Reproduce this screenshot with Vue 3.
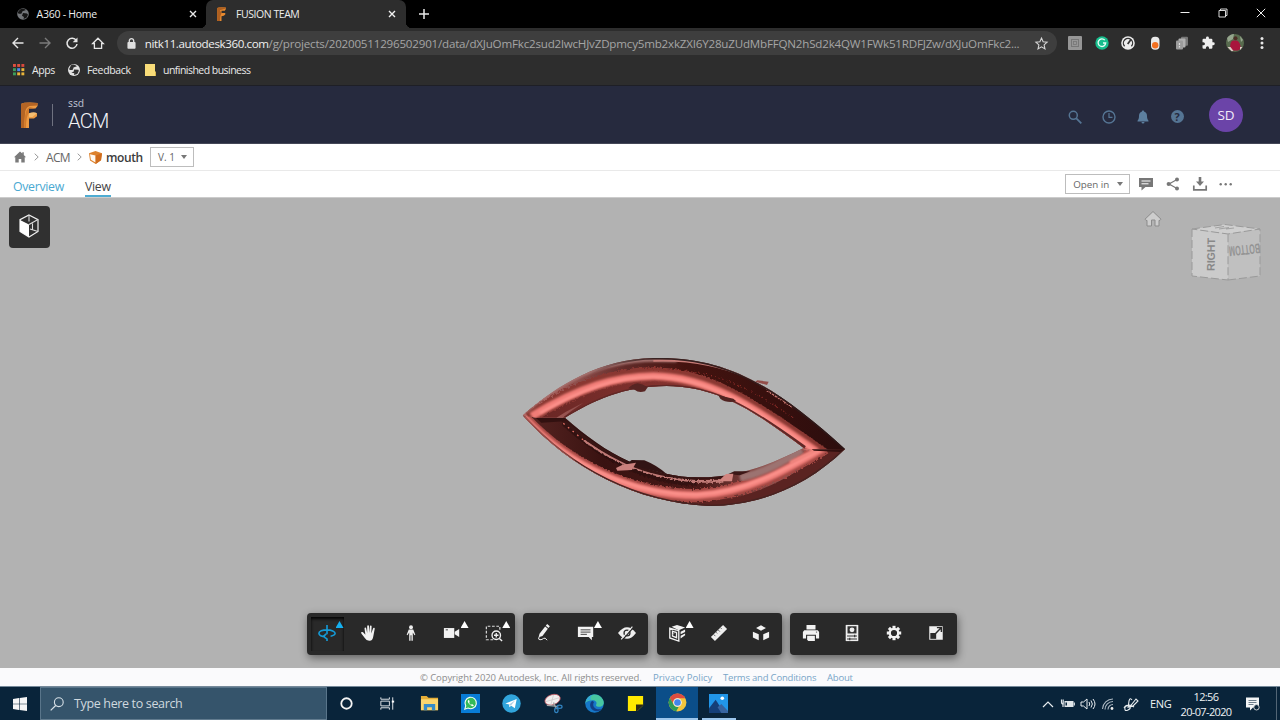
<script setup>
const extraMark = [0, 1, 2]
const appDots = [
  { x: 0, y: 0, c: '#e0503f' }, { x: 4.2, y: 0, c: '#e0503f' }, { x: 8.4, y: 0, c: '#d8483c' },
  { x: 0, y: 4.2, c: '#3d9e5c' }, { x: 4.2, y: 4.2, c: '#4a8af0' }, { x: 8.4, y: 4.2, c: '#e9b53a' },
  { x: 0, y: 8.4, c: '#3d9e5c' }, { x: 4.2, y: 8.4, c: '#e9b53a' }, { x: 8.4, y: 8.4, c: '#e9b53a' }
]
const teeth = [0, 45, 90, 135, 180, 225, 270, 315]
</script>

<template>
  <div class="screen">
    <!-- Browser tabs -->
    <div class="tabstrip">
      <div class="tab idle">
        <svg class="fav" viewBox="0 0 12 12"><circle cx="6" cy="6" r="5.8" fill="#73767a"/><path d="M1 5.200q2 1 3.500 .3l1-2.200L9 2q-3-2-6-.5L1 4zM6 5l4 .4 1 1.300-1.500 3L6.500 11l.5-2-2-1.300z" fill="#151515"/></svg>
        <span class="tabname t-home">A360 - Home</span>
        <svg class="x" viewBox="0 0 8 8"><path d="M1 1l6 6M7 1L1 7" stroke="#e8e8e8" stroke-width="1.400"/></svg>
      </div>
      <div class="tab active">
        <svg class="fav f" viewBox="0 0 18 26"><path d="M1 2q3-2 16-1v3l-2 3H9v4h7v3q-2 3-7 3v9H1z" fill="#e6892f"/><path d="M1 2v24h5q0-10 3-15l-3-5 11-3V1Q5-.5 1 2z" fill="#ad5f20"/></svg>
        <span class="tabname t-fusion">FUSION TEAM</span>
        <svg class="x" viewBox="0 0 8 8"><path d="M1 1l6 6M7 1L1 7" stroke="#f1f1f1" stroke-width="1.400"/></svg>
      </div>
      <svg class="plus" viewBox="0 0 10 10"><path d="M5 0v10M0 5h10" stroke="#e8e8e8" stroke-width="1.500"/></svg>
      <div class="wincontrols">
        <svg viewBox="0 0 10 10"><path d="M.5 4.500h9" stroke="#eee" stroke-width="1"/></svg>
        <svg viewBox="0 0 10 10"><path d="M1 2.500h6.500V9H1zM2.500 2.500V1H9v6.500H7.500" fill="none" stroke="#eee" stroke-width=".9"/></svg>
        <svg viewBox="0 0 10 10"><path d="M.8 .8l8.400 8.400M9.200 .8L.8 9.200" stroke="#eee" stroke-width="1"/></svg>
      </div>
    </div>

    <!-- Address row -->
    <div class="address">
      <div class="nav">
        <svg viewBox="0 0 12 12"><path d="M11.500 6H1M6 1L1 6l5 5" fill="none" stroke="#e6e6e6" stroke-width="1.400"/></svg>
        <svg viewBox="0 0 12 12"><path d="M.5 6H11M6 1l5 5-5 5" fill="none" stroke="#7b7b7b" stroke-width="1.400"/></svg>
        <svg viewBox="0 0 12 12"><path d="M10.300 3.600A5 5 0 1 0 11 7" fill="none" stroke="#e6e6e6" stroke-width="1.500"/><path d="M11.500 .4v4.800H6.700z" fill="#e6e6e6"/></svg>
        <svg viewBox="0 0 12 12"><path d="M.7 6.500L6 1.200l5.300 5.300H9.600v4.800H2.400V6.500z" fill="none" stroke="#e6e6e6" stroke-width="1.300"/></svg>
      </div>
      <div class="pill">
        <svg class="lock" viewBox="0 0 8 10"><rect x=".3" y="3.700" width="7.400" height="6" rx=".8" fill="#e0e0e0"/><path d="M2 4V2.500a2 2 0 0 1 4 0V4" fill="none" stroke="#e0e0e0" stroke-width="1.200"/></svg>
        <span class="url"><b>nitk11.autodesk360.com</b><i>/g/projects/20200511296502901/data/dXJuOmFkc2sud2lwcHJvZDpmcy5mb2xkZXI6Y28uZUdMbFFQN2hSd2k4QW1FWk51RDFJZw/dXJuOmFkc2...</i></span>
        <svg class="star" viewBox="0 0 12 12"><path d="M6 1l1.500 3.400 3.700.4-2.800 2.500.8 3.700L6 9.100 2.800 11l.8-3.700L.8 4.800l3.700-.4z" fill="none" stroke="#d6d6d6" stroke-width="1"/></svg>
      </div>
      <div class="exts">
        <svg viewBox="0 0 20 20"><rect x="3" y="3" width="14" height="14" rx="1" fill="#969696"/><rect x="6.500" y="6.500" width="7" height="7" fill="none" stroke="#777"/><rect x="8.500" y="8.500" width="3" height="3" fill="none" stroke="#777" stroke-width=".8"/></svg>
        <svg viewBox="0 0 20 20"><circle cx="10" cy="10" r="6.700" fill="#17bd8c"/><path d="M12.800 7.200A3.800 3.800 0 1 0 13.700 10H11" fill="none" stroke="#e9fff7" stroke-width="1.300"/></svg>
        <svg viewBox="0 0 20 20"><circle cx="10" cy="10" r="6.800" fill="#ededed"/><path d="M6.600 13.200a4.600 4.600 0 1 1 6.800 0" fill="none" stroke="#333" stroke-width="1.300"/><path d="M9.700 11L13 6.500" stroke="#333" stroke-width="1.700"/></svg>
        <svg viewBox="0 0 20 20"><rect x="6" y="3.700" width="8.500" height="13" rx="4" fill="#e9e9e9"/><circle cx="10.200" cy="12.200" r="3.200" fill="#f37021"/></svg>
        <svg viewBox="0 0 20 20"><rect x="9" y="3.700" width="7" height="9" rx="1" fill="#777"/><rect x="6.500" y="5.500" width="7" height="9" rx="1" fill="#b0b0b0"/><rect x="4" y="7.500" width="7" height="9" rx="1" fill="#9b9b9b"/><path d="M7.500 10v2M7.500 13v1.500" stroke="#ddd" stroke-width="1.200"/></svg>
        <svg viewBox="0 0 24 24"><path d="M20.500 11H19V7a2 2 0 0 0-2-2h-4V3.500a2.500 2.500 0 0 0-5 0V5H4a2 2 0 0 0-2 2v3.800h1.500a2.700 2.700 0 0 1 0 5.400H2V20a2 2 0 0 0 2 2h3.800v-1.500a2.700 2.700 0 0 1 5.400 0V22H17a2 2 0 0 0 2-2v-4h1.500a2.500 2.500 0 0 0 0-5z" transform="translate(4 3.500) scale(.7)" fill="#eee"/></svg>
        <svg viewBox="0 0 20 20"><circle cx="10" cy="10" r="9" fill="#586b4e"/><path d="M2 5q3-4 7-4l-1 5-5 3zM15 3l3 4-2 2z" fill="#94a58c"/><path d="M5 15.500q0-7.500 3-8h4q3 1 4 8l-3 2H8z" fill="#a9153d"/><circle cx="10.500" cy="5.300" r="2" fill="#4c2c25"/><path d="M2.500 14h3l3 4-2 .3zM15 14l2.500 0-2.500 3z" fill="#e0ccc8"/></svg>
        <svg viewBox="0 0 20 20"><circle cx="10" cy="5.500" r="1.500" fill="#e8e8e8"/><circle cx="10" cy="10" r="1.500" fill="#e8e8e8"/><circle cx="10" cy="14.500" r="1.500" fill="#e8e8e8"/></svg>
      </div>
    </div>

    <!-- Bookmarks -->
    <div class="bookmarks">
      <svg class="apps" viewBox="0 0 12 12"><rect v-for="d in appDots" :key="d.x + '-' + d.y" :x="d.x" :y="d.y" width="2.900" height="2.900" :fill="d.c"/></svg>
      <span class="b1">Apps</span>
      <svg class="globe" viewBox="0 0 12 12"><circle cx="6" cy="6" r="6" fill="#e2e2e2"/><path d="M1 5.200q2 1.600 4 .4l.5-2L9 2.200Q6-.4 3 1.200zM6 5.500l4.500.2.300 1.300-1.500 3L6 11l.3-1.700-3-.8 2.500-.9z" fill="#303030"/></svg>
      <span class="b2">Feedback</span>
      <svg class="folder" viewBox="0 0 11 12"><path d="M0 0h10v9.500l1 2.500H0z" fill="#f8dc78"/><path d="M10 7v5h1V8z" fill="#d7b64c"/></svg>
      <span class="b3">unfinished business</span>
    </div>

    <!-- Project header -->
    <header class="project">
      <svg class="logo" viewBox="0 0 18 26"><path d="M1 2Q5-.3 17.500 1v3l-2 2.500H9v4.700h8v3L14 16.500H9V26H1z" fill="#ed9a42"/><path d="M1 2Q5-.3 17.500 1v2.500L9.500 4Q5 6 5 12L4 26H1z" fill="#b46525"/><path d="M5 14q1-8 5-9l5 1.500H9v4.500q-3 3-3 15H4z" fill="#d27a2b"/><path d="M9 11.200q5-2 8 0l-4.500 3.800H9z" fill="#f4bd72"/></svg>
      <div class="sep"></div>
      <div class="names"><span class="team">ssd</span><span class="proj">ACM</span></div>
      <div class="hicons">
        <svg viewBox="0 0 14 14"><circle cx="5.300" cy="5.300" r="4" fill="none" stroke="#557594" stroke-width="1.500"/><path d="M8.300 8.300l5 5" stroke="#557594" stroke-width="1.800"/></svg>
        <svg viewBox="0 0 14 14"><circle cx="7" cy="7" r="6" fill="none" stroke="#557594" stroke-width="1.400"/><path d="M7 3v4.300h3.500" fill="none" stroke="#557594" stroke-width="1.200"/></svg>
        <svg viewBox="0 0 14 14"><path d="M7 .5c.8 0 1 .4 1 1 2.200.6 3 2.300 3 4.500 0 3 .8 3.600 1.500 4.800v.7h-11v-.7C2.300 9.600 3 9 3 6c0-2.200.8-3.900 3-4.500 0-.6.2-1 1-1zM5.500 12h3a1.500 1.500 0 0 1-3 0z" fill="#5c7f9f"/></svg>
        <div class="help">?</div>
      </div>
      <div class="avatar">SD</div>
    </header>

    <!-- Breadcrumbs -->
    <div class="crumbs">
      <svg class="home" viewBox="0 0 13 12"><path d="M6.500 0l2.500 2.300V.8h1.600v3L13 6.300h-1.400V12H7.900V8.200H5.100V12H1.400V6.300H0z" fill="#7a7a7a"/></svg>
      <svg class="chev c1" viewBox="0 0 5 8"><path d="M.7 .7L4.200 4 .7 7.300" fill="none" stroke="#9a9a9a"/></svg>
      <span class="acm">ACM</span>
      <svg class="chev c2" viewBox="0 0 5 8"><path d="M.7 .7L4.200 4 .7 7.300" fill="none" stroke="#9a9a9a"/></svg>
      <svg class="part" viewBox="0 0 13 13"><path d="M0 2.300L6.500 0 13 2.300l-1 7L6.700 13 1 9.400z" fill="#dd822d"/><path d="M1 3.300l5.500 1.300v7L1.900 8.800z" fill="#fffaf3"/><path d="M6.700 4.600L13 2.300l-1 7L6.700 13z" fill="#cf6c1d"/></svg>
      <span class="mouth">mouth</span>
      <div class="version"><span>V. 1</span><em></em></div>
    </div>

    <!-- View tabs -->
    <div class="viewbar">
      <span class="ov">Overview</span>
      <span class="vw">View</span>
      <div class="openin"><span>Open in</span><em></em></div>
      <div class="vicons">
        <svg viewBox="0 0 14 14"><path d="M0 1h14v9H6.500L2.500 13.500V10H0z" fill="#777"/><path d="M2.500 4h9M2.500 6.800h7" stroke="#fff" stroke-width="1"/></svg>
        <svg viewBox="0 0 14 14"><path d="M11 2.500L3 7l8 4.500" fill="none" stroke="#777" stroke-width="1.200"/><circle cx="11" cy="2.400" r="2" fill="#777"/><circle cx="2.700" cy="7" r="2.100" fill="#777"/><circle cx="11" cy="11.600" r="2" fill="#777"/></svg>
        <svg viewBox="0 0 14 14"><path d="M5.700 0h2.600v4.500H11L7 9 3 4.500h2.700z" fill="#777"/><path d="M.8 8.500v4.300h12.400V8.500" fill="none" stroke="#777" stroke-width="1.700"/></svg>
        <svg viewBox="0 0 14 14"><circle v-for="n in extraMark" :key="n" :cx="1.700 + n * 5" cy="7.200" r="1.200" fill="#777"/></svg>
      </div>
    </div>

    <!-- 3D viewer -->
    <main class="viewer">
      <div class="modelbtn">
        <svg viewBox="0 0 22 24"><path d="M11 1l9 4.600v11.800L11 23l-9-5.600V5.600z" fill="none" stroke="#f2f2f2" stroke-width="1.200"/><path d="M2 6l9 4.500V23l-9-5.600z" fill="#fff"/><path d="M11 10.500l9-4.900M11 1v6.500M12 15l8 2.500M14.500 9.500v6" fill="none" stroke="#ddd" stroke-width="1.100"/></svg>
      </div>
      <svg class="model" viewBox="0 0 1050 540">
        <defs>
          <linearGradient id="topShade" gradientUnits="userSpaceOnUse" x1="40" y1="0" x2="1005" y2="0">
            <stop offset="0" stop-color="#b7605c"/><stop offset=".16" stop-color="#90504d"/><stop offset=".32" stop-color="#602a28"/><stop offset=".5" stop-color="#44130f"/><stop offset="1" stop-color="#2c0d0d"/>
          </linearGradient>
          <linearGradient id="lowShade" gradientUnits="userSpaceOnUse" x1="40" y1="0" x2="1005" y2="0">
            <stop offset="0" stop-color="#572522"/><stop offset=".25" stop-color="#391211"/><stop offset=".55" stop-color="#4a1917"/><stop offset=".8" stop-color="#965450"/><stop offset="1" stop-color="#5e2725"/>
          </linearGradient>
          <linearGradient id="innerTop" gradientUnits="userSpaceOnUse" x1="90" y1="0" x2="900" y2="0">
            <stop offset="0" stop-color="#6a2725"/><stop offset=".5" stop-color="#85332f"/><stop offset="1" stop-color="#bf6560"/>
          </linearGradient>
          <linearGradient id="rim" gradientUnits="userSpaceOnUse" x1="240" y1="0" x2="1005" y2="0">
            <stop offset="0" stop-color="#392322" stop-opacity="0"/><stop offset=".25" stop-color="#392322"/><stop offset="1" stop-color="#2b1616"/>
          </linearGradient>
          <filter id="rough" x="-5%" y="-10%" width="110%" height="120%">
            <feTurbulence type="fractalNoise" baseFrequency=".16" numOctaves="2" seed="4"/>
            <feDisplacementMap in="SourceGraphic" scale="16"/>
          </filter>
          <filter id="soft" x="-5%" y="-10%" width="110%" height="120%"><feGaussianBlur stdDeviation="3"/></filter>
          <clipPath id="upper"><path d="M38 226C150 130 270 58 430 54C640 48 790 130 1005 327H885C750 225 630 138 470 138C340 138 250 182 165 233H80z"/></clipPath>
          <clipPath id="lower"><path d="M38 226L80 233H165C290 345 420 412 570 412C690 412 790 370 885 322L920 329L1005 327C890 440 745 498 600 498C380 490 180 385 38 226z"/></clipPath>
        </defs>
        <g clip-path="url(#lower)">
          <rect width="1050" height="540" fill="url(#lowShade)"/>
          <path d="M45 235C190 385 380 485 590 485C740 475 860 405 960 322L1010 322V540H0z" fill="#5a2321"/>
          <path d="M38 232C180 385 370 467 560 467C710 460 830 390 945 323" fill="none" stroke="#a34743" stroke-width="40" filter="url(#rough)"/>
          <path d="M40 230C180 383 370 466 560 466C710 459 830 389 945 321" fill="none" stroke="#ef7d78" stroke-width="22" filter="url(#soft)"/>
          <path d="M110 300C240 402 400 464 560 464C700 459 820 392 930 329" fill="none" stroke="#ff9690" stroke-width="7" filter="url(#soft)"/>
          <path d="M165 245C290 357 420 424 560 423" fill="none" stroke="#230b0b" stroke-width="28" opacity=".5" filter="url(#rough)"/>
          <path d="M225 303C330 378 440 416 560 424H640" fill="none" stroke="#c07a76" stroke-width="8" filter="url(#rough)"/>
          <path d="M155 238C290 354 410 410 560 413L640 412" fill="none" stroke="#381514" stroke-width="10"/>
          <path d="M160 250L225 304" stroke="#e66f64" stroke-width="4" stroke-dasharray="5 13"/>
          <path d="M690 414C770 395 820 365 875 330" fill="none" stroke="#9c7371" stroke-width="22" filter="url(#soft)"/>
          <path d="M840 368Q905 336 930 326L880 324" fill="none" stroke="#f28780" stroke-width="10" filter="url(#soft)"/>
          <path d="M38 226C180 385 380 490 600 498C745 498 890 440 1005 327" fill="none" stroke="#452321" stroke-width="8"/>
          <path d="M40 229Q100 300 190 365" fill="none" stroke="#c86963" stroke-width="9" filter="url(#soft)"/>
        </g>
        <g clip-path="url(#upper)">
          <rect width="1050" height="540" fill="url(#topShade)"/>
          <path d="M85 250C230 142 350 120 470 123C620 128 760 230 915 345L885 322C750 225 620 138 470 138C320 145 240 185 165 250z" fill="none" stroke="url(#innerTop)" stroke-width="34"/>
          <path d="M55 232C210 136 310 103 430 103C600 105 720 192 940 345" fill="none" stroke="#8a3733" stroke-width="42" filter="url(#rough)"/>
          <path d="M65 229C210 140 320 109 430 108C590 110 720 192 920 335" fill="none" stroke="#f17d77" stroke-width="23" filter="url(#soft)"/>
          <path d="M90 219C220 144 320 111 430 110C590 112 720 194 910 330" fill="none" stroke="#ff9690" stroke-width="7" filter="url(#soft)"/>
          <path d="M38 221C155 124 270 62 430 60C450 60 480 61 500 62" fill="none" stroke="#a87673" stroke-width="10" filter="url(#soft)"/>
          <path d="M430 62Q590 56 720 115L800 162" fill="none" stroke="#c87c77" stroke-width="6"/>
          <path d="M770 150L850 202" stroke="#c9766f" stroke-width="7" stroke-dasharray="7 3" filter="url(#rough)"/>
          <path d="M240 100C300 70 370 55 430 54C640 48 790 130 1005 327" fill="none" stroke="url(#rim)" stroke-width="9"/>
          <path d="M165 233C250 182 340 138 470 138C630 138 750 225 885 322" fill="none" stroke="#5f2826" stroke-width="8"/>
          <path d="M400 88Q550 84 650 122T850 235" fill="none" stroke="#922d28" stroke-width="4" stroke-dasharray="3 9" filter="url(#rough)"/>
        </g>
        <path d="M78 234h87l9 9-80 5z" fill="#321110"/>
        <path d="M905 328h100l-15 8-78-4z" fill="#32100f"/>
        <path d="M355 145q10-12 28-15 15 2 30 12l-8 12q-20 5-30-4z" fill="#582523"/>
        <path d="M625 166l45 10 9 8q-30 6-48-8z" fill="#512321"/>
        <path d="M742 121l34 4-5 10-35-10z" fill="#934e4a"/>
        <path d="M350 372l15-12 38 1q38 15 68 42l-70-18z" fill="#321414"/>
        <path d="M318 384l20-10 40-6-12 22-44 2z" fill="#cb817d"/>
        <path d="M655 402l18-8h48l-32 12z" fill="#3c1716"/>
        <path d="M625 424l23-22 22-1-4 23z" fill="#d28580"/>
      </svg>
      <svg class="navhome" viewBox="0 0 18 18"><path d="M9 1.500l8 7.700-1 1.200h-1V16h-4v-6H7.500v6H3v-5.600H2L1 9.200z" fill="#cdcdcd" stroke="#8b8b8b" stroke-width="1"/></svg>
      <svg class="viewcube" viewBox="0 0 76 64">
        <path d="M4 8L37 3.500 72 8 40 13z" fill="#cfcfcf"/><path d="M4 8l36 5v46L4 55z" fill="#cbcbcb"/><path d="M40 13l32-5v47l-32 4z" fill="#c0c0c0"/>
        <path d="M4 8L37 3.500 72 8 40 13zM4 8v47l36 4V13M40 59l32-4V8" fill="none" stroke="#9a9a9a" stroke-width="1" stroke-dasharray="8 3"/>
        <path d="M27 7l9-1.500M31 8l10-1.500M38 8l8-1" stroke="#a3a3a3" stroke-width="1.200"/>
        <text class="cubetext" transform="translate(26.500 50) rotate(-89)" textLength="33" lengthAdjust="spacingAndGlyphs">RIGHT</text>
        <text class="cubetext small" transform="translate(71.500 22.500) rotate(174)" textLength="31" lengthAdjust="spacingAndGlyphs">BOTTOM</text>
      </svg>

      <div class="tools">
        <div class="group">
          <div class="tool on"><svg viewBox="0 0 20 20"><path d="M8 14C4 14 1 12.500 1 10.300S5 6.500 10 6.500s9 1.800 9 3.900c0 1.500-2 2.700-5 3.200M9 11l-3 3 4 2.500M10 1v10.500M10 16v3" fill="none" stroke="#159bd7" stroke-width="1.800"/></svg><i class="more"></i></div>
          <div class="tool"><svg viewBox="0 0 20 20"><path d="M6 12L5 5q0-1 .9-1t1 .9L8 10V2.500q0-1 1-1t1 1V10l1-7.300q.1-1 1-.9t.9 1L12.500 10.500l2-5.500q.4-1 1.300-.7t.5 1.300l-1.500 8q-.8 5-4 5-3.500.4-5.500-3L1.500 10.500q-.6-1 .2-1.500t1.700.2z" fill="#f2f2f2"/></svg></div>
          <div class="tool"><svg viewBox="0 0 20 20"><circle cx="10" cy="3.500" r="2.200" fill="#eee"/><path d="M7.500 6h5l2.300 6-.9.5-1.900-3v9h-1.500v-6h-1v6H8v-9l-1.900 3-.9-.5z" fill="#eee"/></svg></div>
          <div class="tool"><svg viewBox="0 0 20 20"><path d="M1 4.500h11.500v11H1z" fill="#f2f2f2"/><path d="M13 8.500l5-3v9l-5-3z" fill="#f2f2f2"/><path d="M3 6.500h2.500" stroke="#333"/></svg><i class="more"></i></div>
          <div class="tool"><svg viewBox="0 0 20 20"><path d="M9 17.500H1.500v-15h15V7" fill="none" stroke="#ddd" stroke-width="1.300" stroke-dasharray="3 1.800"/><circle cx="12.500" cy="12.500" r="4.700" fill="#292929" stroke="#f2f2f2" stroke-width="1.500"/><path d="M12.500 10v5M10 12.500h5M16 16l3 3" stroke="#f2f2f2" stroke-width="1.500"/></svg><i class="more"></i></div>
        </div>
        <div class="group">
          <div class="tool"><svg viewBox="0 0 20 20"><path d="M13.500 0l3 2.500-1.500 2-3-2.500zM11.300 2.700l3 2.500-6 8-4.300 1.500 1-4z" fill="#f2f2f2"/><path d="M4.500 14.500q-1.500 3 1 3t4-1.500 4 2" fill="none" stroke="#f2f2f2" stroke-width="1.100"/></svg></div>
          <div class="tool"><svg viewBox="0 0 20 20"><path d="M1 3h17v11.500h-1.500V18L13 14.500H1z" fill="#f2f2f2"/><path d="M4 6.500h11M4 9h11M4 11.500h7" stroke="#444" stroke-width="1.100"/></svg><i class="more"></i></div>
          <div class="tool"><svg viewBox="0 0 20 20"><path d="M0 10q10-13 20 0-10 13-20 0z" fill="#eee"/><circle cx="10" cy="10" r="3.300" fill="none" stroke="#292929" stroke-width="1.400"/><path d="M4.500 18L17 4" stroke="#292929" stroke-width="1.500"/><path d="M3.500 17L16 3" stroke="#eee" stroke-width="1.300"/></svg></div>
        </div>
        <div class="group">
          <div class="tool"><svg viewBox="0 0 20 20"><path d="M4 3l6-2 9 3-7 3zM14 8.500l5-2.500v3l-5 2.500zM14 13l5-2.500v2l-5 3.500z" fill="#f2f2f2"/><path d="M2 4.500l10 3v11.500L2 15.500zM5 8v5.500l4.500 1.700v-5.500z" fill="none" stroke="#f2f2f2" stroke-width="1.500"/><path d="M10 7L5 12" stroke="#aaa" stroke-width="1"/></svg><i class="more"></i></div>
          <div class="tool"><svg viewBox="0 0 20 20"><path d="M14.500 1L19 5.500 5.500 19 1 14.500z" fill="#eee"/><path d="M4 11.500l2 2M6.500 9l1.500 1.500M9 6.500l2 2M11.500 4L13 5.500" stroke="#555" stroke-width="1"/></svg></div>
          <div class="tool"><svg viewBox="0 0 20 20"><path d="M10 1.500l5.500 3L10 7.500l-5.500-3zM1 8.500l6.500 3v6.500L1 15zM19 8.500l-6.500 3v6.500L19 15z" fill="#f2f2f2"/></svg></div>
        </div>
        <div class="group">
          <div class="tool"><svg viewBox="0 0 20 20"><path d="M5 1h10v5H5zM2.500 7h15l1.500 2v7h-3.500v-4h-11v4H1V9z" fill="#f2f2f2"/><path d="M5.700 13h8.600V19H7l-1.300-1.500z" fill="#f2f2f2"/><path d="M15.500 9h1.300" stroke="#444"/></svg></div>
          <div class="tool"><svg viewBox="0 0 20 20"><path d="M3 1h14v18H3z" fill="#eee"/><path d="M5 2.500h10v8H5z" fill="#333"/><circle cx="10" cy="6.500" r="2.700" fill="#eee"/><path d="M4.500 13.300h11M4.500 16.700h11M13 12v2.600M7.500 15.400V18" stroke="#333" stroke-width="1.300"/></svg></div>
          <div class="tool"><svg viewBox="0 0 20 20"><g fill="#f2f2f2"><rect v-for="a in teeth" :key="a" x="8.300" y="2" width="3.400" height="4" :transform="`rotate(${a} 10 10)`"/></g><circle cx="10" cy="10" r="4.700" fill="none" stroke="#f2f2f2" stroke-width="2.500"/></svg></div>
          <div class="tool"><svg viewBox="0 0 20 20"><path d="M2.500 2.500h15v15h-15z" fill="#eee"/><path d="M3.700 10h6.500v6.500H3.700z" fill="#292929"/><path d="M9.500 10.500L15.500 4.500M11 4h5v5" fill="none" stroke="#292929" stroke-width="1.600"/></svg></div>
        </div>
      </div>
    </main>

    <footer class="legal">
      <span class="copy">© Copyright 2020 Autodesk, Inc. All rights reserved.</span>
      <a class="l1">Privacy Policy</a><a class="l2">Terms and Conditions</a><a class="l3">About</a>
    </footer>

    <!-- Desktop taskbar -->
    <div class="taskbar">
      <div class="start"><svg viewBox="0 0 14 14"><path d="M0 2l6-.9v5.600H0zM6.600 1L14 0v6.700H6.600zM0 7.300h6v5.600L0 12zM6.600 7.300H14V14l-7.400-1z" fill="#f5f5f5"/></svg></div>
      <div class="search"><svg viewBox="0 0 14 14"><circle cx="8.800" cy="5.200" r="4.400" fill="none" stroke="#d7e0e7" stroke-width="1.100"/><path d="M5.700 8.500L.7 13.400" stroke="#d7e0e7" stroke-width="1.200"/></svg><span>Type here to search</span></div>
      <div class="pins">
        <div><svg viewBox="0 0 20 20"><circle cx="10" cy="10" r="5.500" fill="none" stroke="#f4f4f4" stroke-width="1.900"/></svg></div>
        <div><svg viewBox="0 0 20 20"><path d="M3 3.500v2h9v-2M3 16.500v-2h9v2M3 7.500h9v5H3zM15.500 3.500v13" fill="none" stroke="#e4e8eb" stroke-width="1"/><path d="M14.500 7h2.500v2h-2.500z" fill="#fff"/></svg></div>
        <div><svg viewBox="0 0 20 20"><path d="M1 2h6l2 2h10v13H1z" fill="#e5ae38"/><path d="M1 5.500h18V17H1z" fill="#fbd66e"/><path d="M4 17v-6.500h12V17h-3.500v-3h-5v3z" fill="#358cc9"/></svg></div>
        <div><svg viewBox="0 0 20 20"><rect width="20" height="20" fill="#087cd6"/><path d="M4 16l1-3.500a6 6 0 1 1 2.400 2.300z" fill="#35ba59" stroke="#f0fff0" stroke-width="1.200"/><path d="M7.500 6.500q-1 1 .3 3t3.700 3.200q1.600.5 2-.8l-2-1.300-1 .9-2-2 .6-1L8.500 6.200z" fill="#fff"/></svg></div>
        <div><svg viewBox="0 0 20 20"><circle cx="10" cy="10" r="9.700" fill="#31a5dc"/><path d="M3.500 10L15.500 5.200 13.500 15l-3.800-2.700-2 1.700-.2-3z" fill="#fff"/><path d="M7.500 11L14 6.500 9.200 12.300z" fill="#abcfe5"/></svg></div>
        <div><svg viewBox="0 0 20 20"><ellipse cx="9" cy="6" rx="8.300" ry="5.300" transform="rotate(-18 9 6)" fill="#f2eeee" stroke="#c45760" stroke-width=".8"/><path d="M2 8l14-4M10 1L7 12" stroke="#c9c3c3" stroke-width=".7"/><path d="M3 12l12 1M10 9l3 7" stroke="#a5a5a5" stroke-width="1.500"/><ellipse cx="16.500" cy="13.500" rx="2.500" ry="1.700" fill="none" stroke="#3182bf" stroke-width="1.300"/><ellipse cx="13" cy="17" rx="1.800" ry="2.500" fill="none" stroke="#3182bf" stroke-width="1.300"/></svg></div>
        <div><svg viewBox="0 0 20 20"><circle cx="10" cy="10" r="9.800" fill="#1678c9"/><path d="M1 7C4-1 15-2 19 6c2.200 4.500-.5 8-5 7.500-2-.3-3-1.300-2-3 .8-2-1-4-4-4C4 6.500 1 8 .3 10z" fill="#47c7a1"/><path d="M.2 10Q2 1.500 10 .2c-5 1-5 5-3 6.200C3 6 .8 8 .2 10z" fill="#35a9dc"/><path d="M7.500 7C3 11 6 18 13 18.200q3-.5 4.500-2.700-3 1.200-6-.1C8.500 14 8 11 9.500 8.500z" fill="#123f86"/></svg></div>
        <div><svg viewBox="0 0 20 20"><path d="M2 2h16v10l-6 6H2z" fill="#ffe900"/><path d="M10.500 11H18v1l-6 6h-1.500z" fill="#2c2a18"/></svg></div>
        <div class="current"><svg viewBox="0 0 20 20"><circle cx="10" cy="10" r="9.400" fill="#f1c53d"/><path d="M10 .6a9.400 9.400 0 0 1 8.200 4.800H10a4.700 4.700 0 0 0-4.300 6.600L2 5.200A9.400 9.400 0 0 1 10 .6z" fill="#dd4c40"/><path d="M2 5.200l4 7.200a4.700 4.700 0 0 0 5.300 2.100L8.700 19.300A9.400 9.400 0 0 1 2 5.200z" fill="#2d9a57"/><circle cx="10" cy="10" r="4.500" fill="#f4f4f4"/><circle cx="10" cy="10" r="3.500" fill="#4285ea"/></svg></div>
        <div class="open"><svg viewBox="0 0 20 20"><rect y="0" width="20" height="20" fill="#2196e9"/><path d="M0 15L7 6l9 14H0z" fill="#153f78"/><path d="M9 14l4-3.500 7 7.500v2h-7z" fill="#3864a0"/><circle cx="14" cy="4.500" r="1.900" fill="#fff"/></svg></div>
      </div>
      <div class="tray">
        <svg viewBox="0 0 16 16"><path d="M3 11l5-5 5 5" fill="none" stroke="#e8edf0" stroke-width="1.200"/></svg>
        <svg viewBox="0 0 16 16"><path d="M4.500 5h9v6h-9z" fill="#dfe5e9"/><path d="M14.300 6.500v3M1.500 3.500v2.500q0 2 1.700 2V3.500M3 8v3" fill="none" stroke="#dfe5e9" stroke-width="1.200"/><path d="M5.500 6.500h1.500v3H5.500z" fill="#08243b"/></svg>
        <svg viewBox="0 0 16 16"><path d="M1 6h2.500L7 3v10L3.500 10H1zM9 6q1.500 2 0 4M11 4.500q2.700 3.500 0 7M13 3q4 5 0 10" fill="none" stroke="#e8edf0" stroke-width="1"/></svg>
        <svg viewBox="0 0 16 16"><path d="M2.500 13A10.500 10.500 0 0 1 13 3M5 13.500a8 8 0 0 1 8-8M8 13.500a5 5 0 0 1 5-5" fill="none" stroke="#aebac4" stroke-width="1.100"/><circle cx="12" cy="12.500" r="1.400" fill="#eee"/></svg>
        <svg class="pen" viewBox="0 0 16 16"><path d="M9 8l4-5 2 2-5 5-3 1zM9 4Q7 1 6 5L5 12M1 12q2-4 5-2t-1 4-3-3q4-4 9 0" fill="none" stroke="#e8edf0" stroke-width="1.100"/></svg>
        <span class="lang">ENG</span>
        <div class="clock"><span class="time">12:56</span><span class="date">20-07-2020</span></div>
        <svg class="note" viewBox="0 0 16 16"><path d="M1 1.500h13v10H8L5 14.500v-3H1z" fill="#f3f5f6"/><path d="M3.500 4.500h8M3.500 6.500h8M3.500 8.500h5" stroke="#4b6070" stroke-width=".8"/><circle cx="11.500" cy="11.300" r="2.700" fill="#0b253a" stroke="#eee" stroke-width=".8"/></svg>
        <div class="peek"></div>
      </div>
    </div>
  </div>
</template>

<style>
html, body { margin: 0; overflow: hidden; background: #b2b2b2; }
</style>

<style scoped>
.screen { width: 1280px; height: 720px; display: flex; flex-direction: column; overflow: hidden; font-family: "Open Sans", "Noto Sans", sans-serif; white-space: nowrap; }
.screen * { box-sizing: border-box; }
svg { display: block; flex: none; overflow: visible; }
span, i, b { font-style: normal; font-weight: 400; }
.screen > * { flex: none; }

.tabstrip { height: 28px; background: #000; display: flex; align-items: center; color: #eee; font-size: 10.500px; }
.tab { display: flex; align-items: center; height: 28px; }
.idle { width: 206px; padding: 0 9px 0 17px; }
.active { position: relative; width: 200px; padding: 0 10px 0 10px; background: #2d2d2d; border-radius: 7px 7px 0 0; }
.active::before, .active::after { content: ""; position: absolute; bottom: 0; width: 6px; height: 6px; }
.active::before { left: -6px; background: radial-gradient(circle at 0 0, #000 6px, #2d2d2d 6.500px); }
.active::after { right: -6px; background: radial-gradient(circle at 100% 0, #000 6px, #2d2d2d 6.500px); }
.fav { width: 12px; height: 12px; margin-right: 7.500px; }
.fav.f { width: 11px; height: 14px; margin-right: 9px; }
.x { width: 8px; height: 8px; margin-left: auto; }
.t-home { letter-spacing: -.25px; }
.t-fusion { letter-spacing: -.45px; }
.plus { width: 10px; height: 10px; margin-left: 13px; }
.wincontrols { margin-left: auto; margin-right: 0; padding-bottom: 3px; display: grid; grid-template-columns: repeat(3, 38px); justify-items: center; }
.wincontrols svg { width: 10px; height: 10px; }

.address { height: 30px; background: #2d2d2d; display: flex; align-items: center; }
.nav { margin-left: 5px; display: grid; grid-template-columns: repeat(4, 26.700px); justify-items: center; }
.nav svg { width: 12px; height: 12px; }
.pill { margin-left: 5px; width: 940px; height: 24px; border-radius: 12px; background: #3e3e3e; display: flex; align-items: center; padding: 0 9px 0 10px; }
.lock { width: 9px; height: 11px; }
.url { margin-left: 9px; font-size: 11.600px; }
.url b { color: #f0f0f0; letter-spacing: -.4px; }
.url i { color: #a5a5a5; letter-spacing: -.2px; }
.star { width: 13px; height: 13px; margin-left: auto; }
.exts { margin-left: 4.800px; display: grid; grid-template-columns: repeat(8, 26.700px); justify-items: center; }
.exts svg { width: 20px; height: 20px; }

.bookmarks { height: 28px; background: #2d2d2d; border-bottom: 1px solid #1e1f26; display: flex; align-items: center; padding: 0 0 4px 13px; color: #eaeaea; font-size: 10.500px; }
.apps { width: 12px; height: 12px; margin-right: 7px; }
.b1 { width: 36px; letter-spacing: -.45px; }
.globe { width: 12px; height: 12px; margin-right: 7px; }
.b2 { width: 58px; letter-spacing: -.35px; }
.folder { width: 11px; height: 12px; margin-right: 7px; }
.b3 { letter-spacing: -.53px; }

.project { height: 58px; background: #262a3e; border-bottom: 1px solid #444757; display: flex; align-items: center; padding-left: 20px; }
.logo { width: 18px; height: 26px; }
.sep { width: 1px; height: 22px; background: #6f7280; margin: 0 15px 0 14px; }
.names { display: flex; flex-direction: column; font-family: "Noto Sans", sans-serif; }
.team { font-size: 10.300px; line-height: 14px; color: #b9bdcb; }
.proj { font-family: Roboto, "Noto Sans", sans-serif; font-size: 20px; line-height: 23px; color: #f3f4f7; font-weight: 300; letter-spacing: -.7px; }
.hicons { margin-left: auto; margin-top: 4px; display: grid; grid-template-columns: repeat(4, 34px); justify-items: center; }
.hicons svg { width: 14px; height: 14px; }
.help { width: 13px; height: 13px; border-radius: 50%; background: #557594; color: #262a3e; font-size: 11px; font-weight: 700; line-height: 13px; text-align: center; }
.avatar { width: 34px; height: 34px; margin: 1px 37px 0 15px; border-radius: 50%; background: #6b44a8; color: #f1eaf8; font-size: 13.500px; line-height: 34px; text-align: center; }

.crumbs { height: 27px; background: #fff; border-bottom: 1px solid #e9e9e9; display: flex; align-items: center; padding-left: 14px; font-size: 12px; color: #666; }
.home { width: 12px; height: 12px; }
.chev { width: 5px; height: 8px; }
.c1 { margin: 0 7px 0 8px; }
.c2 { margin: 0 7px 0 7px; }
.acm { width: 24px; letter-spacing: -.7px; }
.part { width: 13px; height: 13px; margin-right: 4px; }
.mouth { width: 36px; font-size: 12px; font-weight: 600; color: #3c3c3c; letter-spacing: -.4px; }
.version { margin-left: 8px; width: 44px; height: 20px; border: 1px solid #bdbdbd; display: flex; align-items: center; justify-content: space-between; padding: 0 6px 0 7px; font-size: 10px; }
em { width: 0; border: 3px solid transparent; border-top: 4px solid #777; border-bottom: 0; }

.viewbar { height: 27px; background: #fff; border-bottom: 1px solid #ccc; display: flex; align-items: center; padding-left: 13px; font-size: 12.300px; }
.ov { color: #4aa9d2; width: 72px; letter-spacing: -.3px; padding-top: 5px; }
.vw { color: #444; width: 26px; height: 26px; line-height: 17px; padding-top: 7px; border-bottom: 2px solid #4eacd2; letter-spacing: -.3px; }
.openin { margin-left: auto; width: 65px; height: 20px; border: 1px solid #bdbdbd; display: flex; align-items: center; justify-content: space-between; padding: 0 6px 0 7px; font-size: 9.800px; color: #666; }
.vicons { margin: 0 40.500px 0 3px; display: grid; grid-template-columns: repeat(4, 26.600px); justify-items: center; }
.vicons svg { width: 14px; height: 14px; }

.viewer { position: relative; height: 470px; background: #b2b2b2; }
.modelbtn { position: absolute; left: 8.500px; top: 8px; width: 41.500px; height: 42px; border-radius: 4px; background: #303030; display: grid; place-items: center; }
.modelbtn svg { width: 22px; height: 24px; margin-top: -2px; }
.model { position: absolute; left: 510px; top: 142px; width: 350px; height: 180px; }
.navhome { position: absolute; left: 1144px; top: 12px; width: 18px; height: 18px; }
.viewcube { position: absolute; left: 1188px; top: 23px; width: 76px; height: 64px; }
.cubetext { font-family: "Liberation Sans", sans-serif; font-size: 11px; font-weight: 700; fill: #888; }
.cubetext.small { font-size: 14px; fill: #939393; }
.tools { position: absolute; left: 306.500px; top: 415px; display: flex; gap: 8.300px; }
.group { height: 42px; border-radius: 4px; background: #292929; display: flex; box-shadow: 1px 3px 8px rgba(0, 0, 0, .45); }
.tool { position: relative; width: 41.700px; height: 42px; display: grid; place-items: center; }
.tool svg { width: 18px; height: 18px; margin-top: -2px; }
.tool.on::before { content: ""; position: absolute; left: 4px; top: 4px; right: 4px; bottom: 4px; box-shadow: inset 0 2px 3px #050505; }
.more { position: absolute; left: 29px; top: 8px; width: 8px; height: 7px; background: #fff; clip-path: polygon(50% 0, 100% 100%, 0 100%); }
.on .more { background: #15b0f0; }

.legal { height: 18px; background: #fafafc; display: flex; align-items: center; padding-left: 420px; font-size: 9.500px; color: #8d8d8d; }
.legal a { color: #78a5c8; }
.copy { width: 233px; letter-spacing: -.1px; }
.l1 { width: 70px; }
.l2 { width: 104px; letter-spacing: -.2px; }
.l3 { letter-spacing: -.2px; }

.taskbar { height: 34px; background: #09243a; border-top: 1px solid #75899a; display: flex; align-items: center; color: #eef2f4; }
.start { width: 40px; display: grid; place-items: center; }
.start svg { width: 14px; height: 14px; }
.search { width: 287px; height: 33px; background: #35546b; border: 1px solid #59758a; border-bottom-color: #627c8f; display: flex; align-items: center; padding-left: 9px; font-size: 12.500px; color: #d0d9df; }
.search svg { width: 14px; height: 14px; margin-right: 10px; }
.search span { letter-spacing: -.35px; }
.pins { margin-left: -1px; display: grid; grid-template-columns: repeat(10, 41.300px); height: 33px; }
.pins div { display: grid; place-items: center; position: relative; }
.pins svg { width: 19px; height: 19px; }
.pins .current { background: #0b4e89; border-bottom: 2px solid #9cc6ec; }
.open::after { content: ""; position: absolute; bottom: 0; left: 4px; width: 34px; height: 2px; background: #9cc6ec; }
.tray { margin-left: auto; display: flex; align-items: center; height: 33px; }
.tray svg { width: 16px; height: 16px; margin-right: 4px; }
.tray .pen { margin-left: 3px; margin-right: 11px; }
.lang { font-size: 11px; width: 30px; letter-spacing: -.3px; }
.clock { width: 52px; display: flex; flex-direction: column; align-items: center; font-size: 11px; line-height: 15px; letter-spacing: -.65px; }
.tray .note { margin: 0 15px 0 13px; }
.peek { width: 4px; height: 33px; border-left: 1px solid #526575; }
</style>
